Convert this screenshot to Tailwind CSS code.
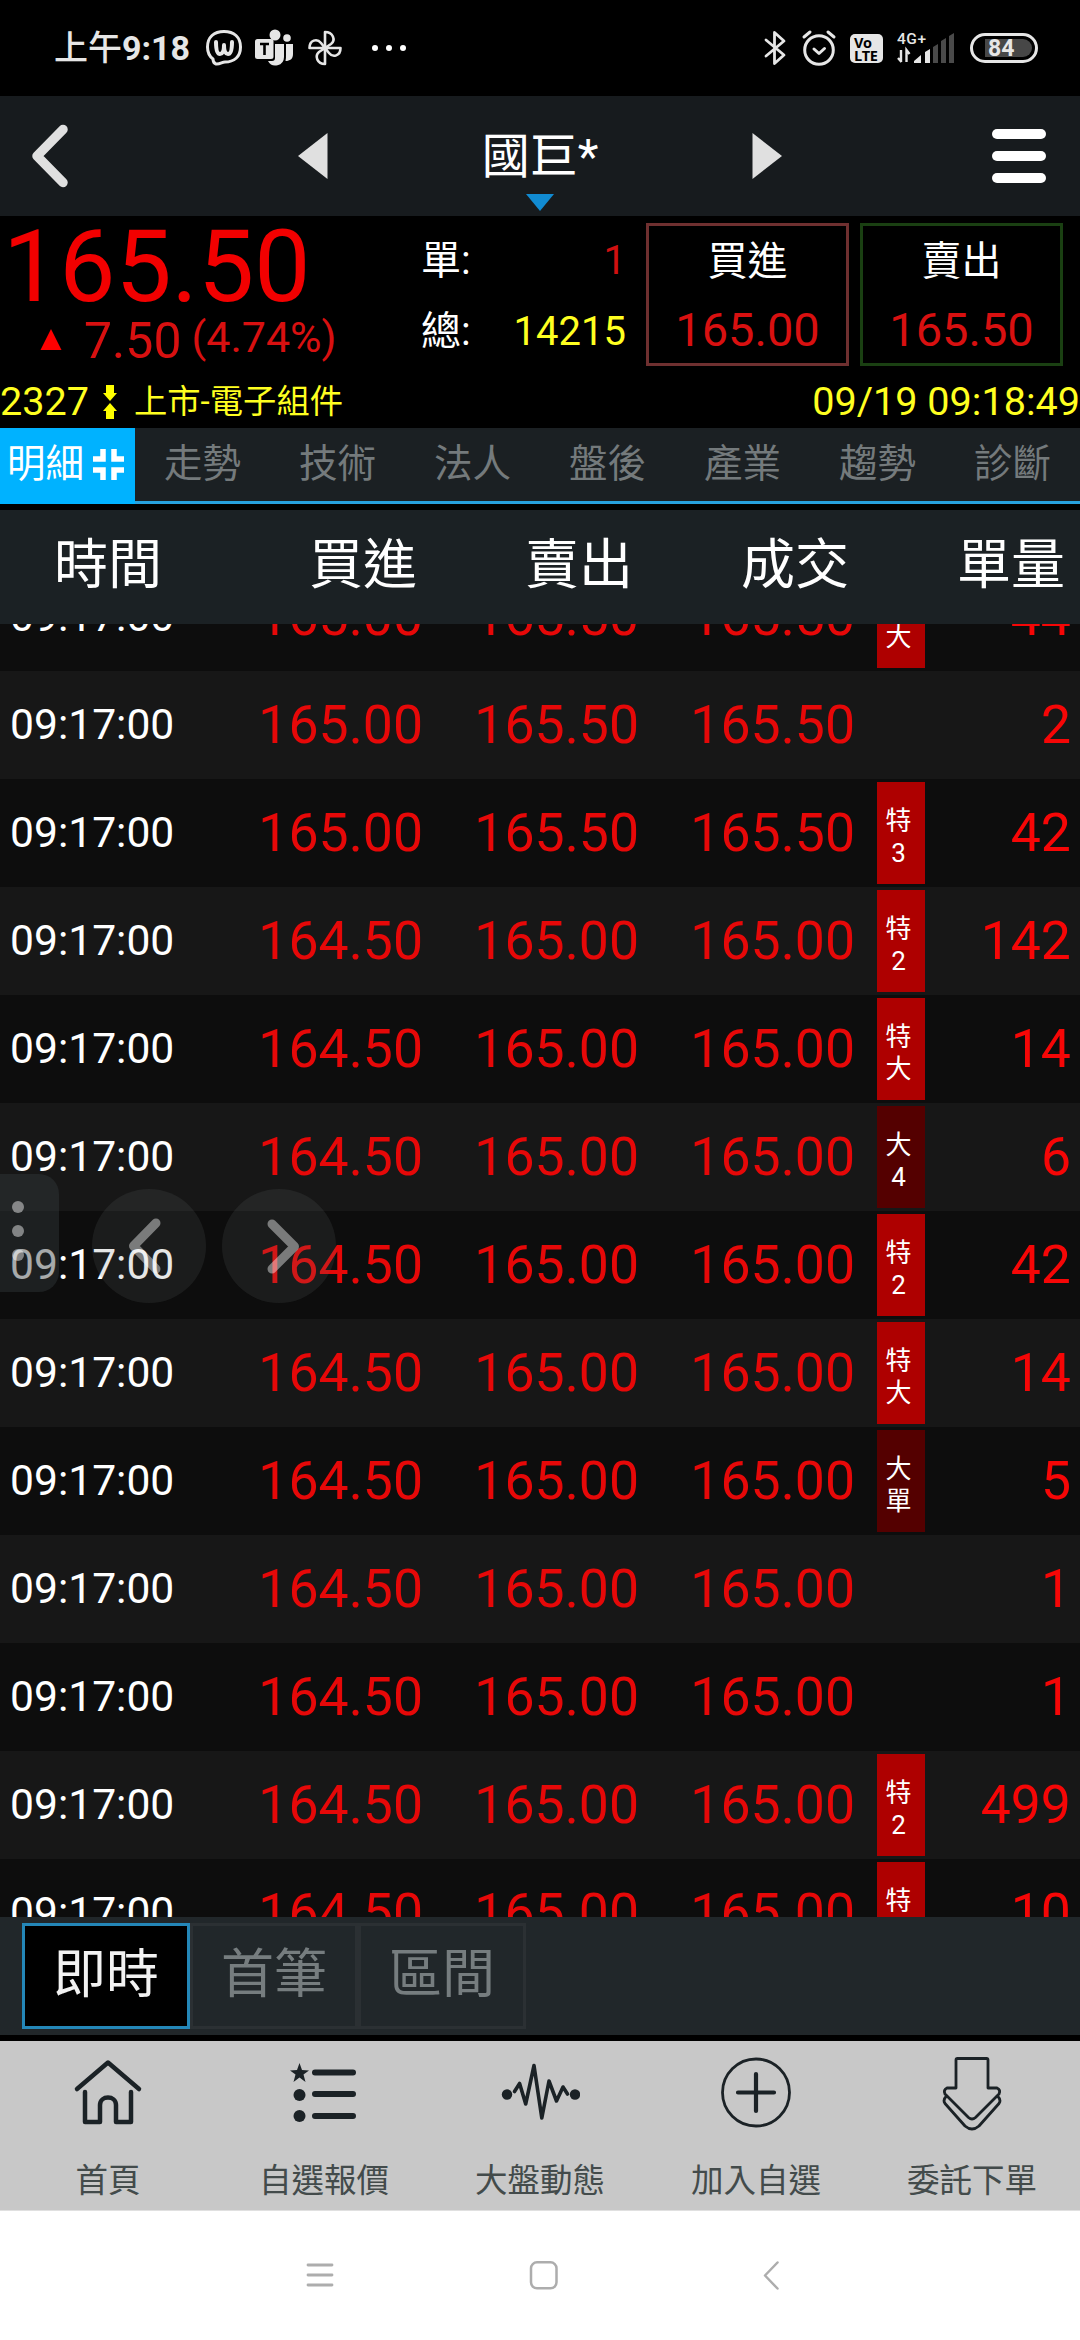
<!DOCTYPE html>
<html lang="zh-Hant">
<head>
    <meta charset="UTF-8">
    <meta name="viewport" content="width=device-width, initial-scale=1.0">
    <title>國巨* 明細</title>
    <script src="https://cdn.jsdelivr.net/npm/@tailwindcss/browser@4"></script>
</head>
<body class="w-[1080px] h-[2340px] overflow-hidden bg-black text-white font-['Roboto','Noto_Sans_CJK_TC',sans-serif] flex flex-col whitespace-nowrap">

    <!-- Status bar -->
    <div class="h-24 shrink-0 flex items-center justify-between pl-[54px] pr-[42px] text-[#e6e6e6]">
        <div class="flex items-center">
            <span class="text-[34px] leading-[34px] font-medium w-[151px]">上午<span class="font-bold">9:18</span></span>
            <svg class="w-[38px] h-[38px]" viewBox="0 0 38 38" fill="none" stroke="currentColor" stroke-width="3" stroke-linecap="round" stroke-linejoin="round">
                <path d="M8 30C4 27 2.500 23 2.500 18C2.500 8 9 2.500 19 2.500S35.500 8 35.500 18S29 33 20 33C17 33 15 35.500 11 35C8 34 8 32 8 30Z"/>
                <path stroke-width="4" d="M11 13C11 21 12 25 15 25C18 25 19 20 19 16C19 20 20 25 23 25C26 25 27 21 27 13"/>
            </svg>
            <svg class="w-[39px] h-[38px] ml-[12px]" viewBox="0 0 39 38" fill="currentColor">
                <circle cx="20" cy="6" r="5.500"/>
                <circle cx="32" cy="9" r="3.800"/>
                <path d="M20 15h9v13a8.500 8.500 0 0 1-16 4h4a3 3 0 0 0 3-3z"/>
                <path d="M31 15h7v10c0 5-3 7-7.500 7c.5-2 .5-4 .5-6z"/>
                <rect x="0" y="10" width="18.500" height="20" rx="2.500"/>
                <path d="M5 15h9M9.500 15v11" stroke="#000" stroke-width="2.600" fill="none"/>
            </svg>
            <svg class="w-[34px] h-[36px] ml-[14px]" viewBox="0 0 34 36" fill="none" stroke="currentColor" stroke-width="2.600" stroke-linejoin="round">
                <path d="M17 18V2C25 2 28 10 23 14L17 18Z"/>
                <path d="M17 18H32.500C32.500 26 25 28 21 23L17 18Z"/>
                <path d="M17 18V34C9 34 6.500 26 11 22L17 18Z"/>
                <path d="M17 18H1.500C1.500 10 9 8 13 13L17 18Z"/>
            </svg>
            <div class="flex gap-2 ml-[30px]">
                <i class="size-[6px] rounded-full bg-white"></i>
                <i class="size-[6px] rounded-full bg-white"></i>
                <i class="size-[6px] rounded-full bg-white"></i>
            </div>
        </div>
        <div class="flex items-center">
            <svg class="w-[22px] h-[36px]" viewBox="0 0 22 36" fill="none" stroke="currentColor" stroke-width="2.800" stroke-linecap="round" stroke-linejoin="round">
                <path d="M2 10L20 25L10.500 33.500V2.500L20 11L2 26"/>
            </svg>
            <svg class="w-[36px] h-[38px] ml-[15px]" viewBox="0 0 36 38" fill="none" stroke="currentColor" stroke-width="3" stroke-linecap="round" stroke-linejoin="round">
                <circle cx="18" cy="21" r="14.300"/>
                <path d="M13 20L18 24.500L23.500 19.500M3 8L9 3M27 3L33 8"/>
            </svg>
            <div class="w-[33px] h-[29px] ml-[13px] rounded-[5px] bg-[#e6e6e6] text-black font-bold text-[14.500px] leading-[13px] pl-[4px] pt-[2px] tracking-tight font-['Open_Sans','Roboto',sans-serif]">Vo<br>LTE</div>
            <svg class="w-[58px] h-[36px] ml-[14px]" viewBox="0 0 58 36" fill="currentColor">
                <text x="0" y="13.500" font-size="15.500" font-weight="500" textLength="29">4G+</text>
                <path d="M4 20V32M1 28L4.500 32M9.500 32V20L12.500 24" fill="none" stroke="currentColor" stroke-width="2.400"/>
                <path d="M17 33V31L24 25V33ZM28 33V22L33 19V33Z"/>
                <path fill="#4a4a4a" d="M36 33V17L41 14V33ZM44 33V11L49 8V33ZM52 33V6L57 3V33Z"/>
            </svg>
            <div class="ml-[15px] w-[68px] h-[30px] rounded-full border-[3px] border-current p-[3px] pl-[12px]">
                <div class="h-full rounded-l-[3px] rounded-r-full bg-[#474747] flex items-center pl-[3px] text-[23px] leading-none font-bold">84</div>
            </div>
        </div>
    </div>

    <!-- Title bar -->
    <div class="relative h-[120px] shrink-0 bg-[#171b1e] flex items-center justify-between pl-[30px] pr-[34px]">
        <svg class="w-[40px] h-[66px]" viewBox="0 0 40 66" fill="none" stroke="#e0e0e0" stroke-width="9.500" stroke-linecap="round" stroke-linejoin="round">
            <path d="M33 6.500L7 33L33 59.500"/>
        </svg>
        <div class="absolute inset-x-[298px] inset-y-0 flex items-center justify-between">
            <svg class="w-[30px] h-[46px]" viewBox="0 0 30 46"><path fill="#e0e0e0" d="M0 23L29.500 0V46Z"/></svg>
            <span class="text-[48px] leading-[48px] pt-[1px]">國巨*</span>
            <svg class="w-[30px] h-[46px]" viewBox="0 0 30 46"><path fill="#e0e0e0" d="M30 23L.5 0V46Z"/></svg>
        </div>
        <svg class="absolute left-[526px] top-[98px] w-[28px] h-[17px]" viewBox="0 0 28 17"><path fill="#118bd2" d="M0 0H28L14 17Z"/></svg>
        <div class="flex flex-col gap-[12px]">
            <i class="w-[54px] h-[10px] rounded-full bg-white"></i>
            <i class="w-[54px] h-[10px] rounded-full bg-white"></i>
            <i class="w-[54px] h-[10px] rounded-full bg-white"></i>
        </div>
    </div>

    <!-- Quote summary -->
    <div class="h-[162px] shrink-0 flex pt-[7px]">
        <div class="w-[421px]">
            <div class="text-[100px] leading-[88px] text-[#f20000] pl-[3px]">165.50</div>
            <div class="flex items-baseline text-[#d81010] pl-[40px] -mt-px">
                <svg class="w-[22px] h-[29px]" viewBox="0 0 22 29"><path fill="#f00" d="M11 0L21.500 21H.5Z"/></svg>
                <span class="text-[50px] leading-[62px] ml-[22px]">7.50</span>
                <span class="text-[43px] leading-[50px] ml-[10px] relative -top-[6px]">(4.74%)</span>
            </div>
        </div>
        <div class="w-[205px] text-[40px] leading-[71px] pt-[2px]">
            <div class="flex justify-between"><span>單:</span><span class="text-[#d01010]">1</span></div>
            <div class="flex justify-between"><span>總:</span><span class="text-[#ffff20]">14215</span></div>
        </div>
        <div class="flex gap-[11px] ml-[20px] text-center">
            <div class="w-[203px] h-[143px] border-[3px] border-[#6f3030] pt-[2px]">
                <div class="text-[40px] leading-[68px]">買進</div>
                <div class="text-[47px] leading-[68px] text-[#d81010]">165.00</div>
            </div>
            <div class="w-[203px] h-[143px] border-[3px] border-[#1a4012] pt-[2px]">
                <div class="text-[40px] leading-[68px]">賣出</div>
                <div class="text-[47px] leading-[68px] text-[#d81010]">165.50</div>
            </div>
        </div>
    </div>

    <div class="h-[50px] shrink-0 flex items-center text-[#ffff20] text-[39.600px] leading-[50px] pb-[2px]">
        <span class="w-[103px]">2327</span>
        <svg class="w-[14px] h-[34px]" viewBox="0 0 14 34" fill="#ff0"><path d="M3 0H11V8H14L7 16L0 8H3ZM3 34H11V26H14L7 18L0 26H3Z"/></svg>
        <span class="text-[33.300px] ml-[17px]">上市-電子組件</span>
        <span class="ml-auto">09/19 09:18:49</span>
    </div>

    <!-- Tabs -->
    <div class="h-[76px] shrink-0 grid grid-cols-8 bg-[#1b2023] border-b-[3px] border-[#27a0dc] text-[38.500px] leading-[71px] text-center text-[#747a7c]">
        <div class="h-[76px] bg-[#00b2ff] text-white flex pl-[7px]">
            <span>明細</span>
            <svg class="w-[31px] h-[31px] mt-[21px] ml-[9px]" viewBox="0 0 31 31" fill="none" stroke="#fff" stroke-width="5.500"><path d="M0 10H10V0M21 0V10H31M0 21H10V31M21 31V21H31"/></svg>
        </div>
        <div>走勢</div>
        <div>技術</div>
        <div>法人</div>
        <div>盤後</div>
        <div>產業</div>
        <div>趨勢</div>
        <div>診斷</div>
    </div>

    <!-- Table header -->
    <div class="mt-[6px] h-[114px] shrink-0 bg-[#1b2124] grid grid-cols-5 text-[54px] leading-[112px] text-right">
        <div class="text-center">時間</div>
        <div class="pr-[15px]">買進</div>
        <div class="pr-[15px]">賣出</div>
        <div class="pr-[15px]">成交</div>
        <div class="pr-[15px]">單量</div>
    </div>

    <!-- Tick list -->
    <div class="relative h-[1293px] shrink-0 overflow-hidden">
        <div id="ticks" class="-mt-[61px]"></div>

        <!-- Floating controls -->
        <div class="absolute left-0 top-[550px] w-[59px] h-[118px] rounded-r-[20px] bg-[#34393c]/43 flex flex-col gap-[12px] pt-[27px] pl-[12px]">
            <i class="size-[12px] rounded-full bg-white/45"></i>
            <i class="size-[12px] rounded-full bg-white/45"></i>
            <i class="size-[12px] rounded-full bg-white/45"></i>
        </div>
        <div class="absolute left-[92px] top-[565px] flex gap-[16px]">
            <div class="size-[114px] rounded-full bg-[#65686c]/17">
                <svg class="size-full" viewBox="0 0 114 114" fill="none" stroke="#fff" stroke-opacity=".42" stroke-width="9" stroke-linecap="round" stroke-linejoin="round"><path d="M64 34L41.500 57L64 80"/></svg>
            </div>
            <div class="size-[114px] rounded-full bg-[#65686c]/17">
                <svg class="size-full" viewBox="0 0 114 114" fill="none" stroke="#fff" stroke-opacity=".42" stroke-width="9" stroke-linecap="round" stroke-linejoin="round"><path d="M50 35L72.500 57.500L50 80"/></svg>
            </div>
        </div>
    </div>

    <!-- Filter buttons -->
    <div class="h-[118px] shrink-0 bg-[#21272a] flex pl-[22px] pt-[6px] text-[53px] leading-[98px] text-center text-[#767d7f]">
        <div class="w-[168px] h-[106px] border-[3px] border-[#2487b8] bg-black text-[#f2f2f2]">即時</div>
        <div class="w-[168px] h-[106px] border-[3px] border-[#2b3033]">首筆</div>
        <div class="w-[168px] h-[106px] border-[3px] border-[#2b3033]">區間</div>
    </div>

    <!-- App navigation -->
    <div class="mt-[6px] h-[170px] shrink-0 bg-[#c8c8c8] border-b border-[#e0e0e0] grid grid-cols-5 text-[32.500px] leading-[40px] text-[#434b4b] text-center">
        <div class="flex flex-col items-center pt-[12px]">
            <svg class="w-[80px] h-[80px] mb-[28px]" viewBox="0 0 80 80" fill="none" stroke="#1b2226" stroke-width="4.500" stroke-linecap="round" stroke-linejoin="round">
                <path d="M9 36L40 9.500L71 36M17 39V69H32V52C32 42 48 42 48 52V69H63V39"/>
            </svg>
            <span>首頁</span>
        </div>
        <div class="flex flex-col items-center pt-[12px]">
            <svg class="w-[80px] h-[80px] mb-[28px]" viewBox="0 0 80 80" fill="#1b2226">
                <path d="M15.500 10L18 17L25 17.500L19.500 21.500L21.500 29L15.500 24.500L9.500 29L11.500 21.500L6 17.500L13 17Z"/>
                <circle cx="15.500" cy="42" r="6"/>
                <circle cx="15.500" cy="63" r="6"/>
                <path d="M31 19.500H69M31 41H69M31 63H69" stroke="#1b2226" stroke-width="6" stroke-linecap="round"/>
            </svg>
            <span>自選報價</span>
        </div>
        <div class="flex flex-col items-center pt-[12px]">
            <svg class="w-[80px] h-[80px] mb-[28px]" viewBox="0 0 80 80" fill="none" stroke="#1b2226" stroke-width="3.600" stroke-linecap="round" stroke-linejoin="round">
                <path d="M14.500 38.500L19.600 30.500L25.700 51L34 12.500L41.800 65L49 28L56.500 48L63 34L67.500 41"/>
                <circle cx="7" cy="41.500" r="5.200" fill="#1b2226" stroke="none"/>
                <circle cx="75" cy="41.500" r="5.200" fill="#1b2226" stroke="none"/>
            </svg>
            <span>大盤動態</span>
        </div>
        <div class="flex flex-col items-center pt-[12px]">
            <svg class="w-[80px] h-[80px] mb-[28px]" viewBox="0 0 80 80" fill="none" stroke="#1b2226" stroke-linecap="round">
                <circle cx="40" cy="39.500" r="33.500" stroke-width="2.800"/>
                <path stroke-width="4.200" d="M22 39.500H58M40 21V58"/>
            </svg>
            <span>加入自選</span>
        </div>
        <div class="flex flex-col items-center pt-[12px]">
            <svg class="w-[80px] h-[80px] mb-[28px]" viewBox="0 0 80 80" fill="none" stroke="#1b2226" stroke-width="2.800" stroke-linejoin="round">
                <path d="M24 7Q24 5.500 25.500 5.500H54.500Q56 5.500 56 7V35H65Q69 37 67 41L43.500 64.500Q40 67.500 36.500 64.500L13 41Q11 37 15 35H24Z"/>
                <path d="M14.500 43Q10.500 47 13 50.500L33 73Q40 79 47 73L67 50.500Q69.500 47 65.500 43"/>
            </svg>
            <span>委託下單</span>
        </div>
    </div>

    <!-- System navigation -->
    <div class="h-[129px] shrink-0 bg-white flex items-center pl-[306px]">
        <svg class="w-[28px] h-[30px]" viewBox="0 0 28 30" fill="none" stroke="#adadad" stroke-width="2.800" stroke-linecap="round"><path d="M2 4H26M2 14H26M2 24H26"/></svg>
        <svg class="w-[30px] h-[30px] ml-[195px]" viewBox="0 0 30 30" fill="none" stroke="#adadad" stroke-width="2.500"><rect x="2" y="1.300" width="25.500" height="26" rx="6"/></svg>
        <svg class="w-[18px] h-[30px] ml-[203px]" viewBox="0 0 18 30" fill="none" stroke="#adadad" stroke-width="2.500" stroke-linecap="round" stroke-linejoin="round"><path d="M15.500 1.500L3 14.500L15.500 27.500"/></svg>
    </div>

    <script>
        // bid, ask, deal, tag, volume
        const ticks = [
            ['165.00', '165.50', '165.50', '特大', 44],
            ['165.00', '165.50', '165.50', '', 2],
            ['165.00', '165.50', '165.50', '特3', 42],
            ['164.50', '165.00', '165.00', '特2', 142],
            ['164.50', '165.00', '165.00', '特大', 14],
            ['164.50', '165.00', '165.00', '大4', 6],
            ['164.50', '165.00', '165.00', '特2', 42],
            ['164.50', '165.00', '165.00', '特大', 14],
            ['164.50', '165.00', '165.00', '大單', 5],
            ['164.50', '165.00', '165.00', '', 1],
            ['164.50', '165.00', '165.00', '', 1],
            ['164.50', '165.00', '165.00', '特2', 499],
            ['164.50', '165.00', '165.00', '特大', 10],
        ];

        function renderTag(tag) {
            if (!tag) return '<div class="w-[48px]"></div>';
            const bg = tag[0] === '特' ? 'bg-[#ae0000]' : 'bg-[#540000]';
            return `<div class="w-[48px] h-[102px] ${bg} text-white text-[26px] leading-[32px] text-center pt-[23px] pr-[5px]">${tag[0]}<br>${tag[1]}</div>`;
        }

        document.getElementById('ticks').innerHTML = ticks.map(([bid, ask, deal, tag, vol], i) => `
            <div class="h-[108px] flex items-center text-[53.600px] leading-[60px] text-right text-[#e60808] ${i % 2 ? 'bg-[#171717]' : 'bg-[#0d0d0d]'}">
                <div class="w-[207px] pl-[10px] text-left text-[42.600px] leading-[58px] pb-[2px] text-white">09:17:00</div>
                <div class="w-[216px]">${bid}</div>
                <div class="w-[216px]">${ask}</div>
                <div class="w-[216px] mr-[22px]">${deal}</div>
                ${renderTag(tag)}
                <div class="w-[146px] text-[#f60606]">${vol}</div>
            </div>`).join('');
    </script>
</body>
</html>
